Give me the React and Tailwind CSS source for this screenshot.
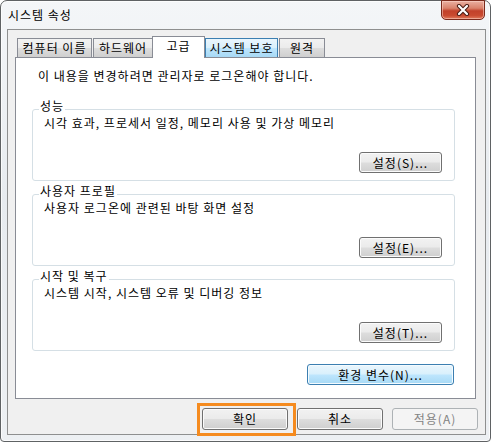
const btnStyles = {
  normal:
    'border-[#707070] bg-[linear-gradient(180deg,#f2f2f2_0%,#ebebeb_48%,#dddddd_52%,#cfcfcf_100%)] text-black shadow-[inset_0_0_0_1px_#fbfbfb]',
  hot: 'border-[#3c7fb1] bg-[linear-gradient(180deg,#eaf6fd_0%,#d9f0fc_48%,#bee6fd_52%,#a7d9f5_100%)] text-black shadow-[inset_0_0_0_1px_#f4fbff]',
  disabled: 'border-[#adb2b5] bg-[#f4f4f4] text-[#838383]',
}

const Btn = ({ children, variant = 'normal', className = '' }) => (
  <div
    className={`flex items-center justify-center rounded-[3px] border leading-[14px] ${btnStyles[variant]} ${className}`}
  >
    {children}
  </div>
)

const tabStyles = {
  normal:
    'h-[19px] border-[#898c95] bg-[linear-gradient(180deg,#f2f2f2_0%,#ebebeb_48%,#dddddd_52%,#cfcfcf_100%)]',
  hot: 'h-[19px] border-[#3c7fb1] bg-[linear-gradient(180deg,#eaf6fd_0%,#d9f0fc_48%,#bee6fd_52%,#a7d9f5_100%)]',
  active: 'relative z-10 -mb-px -ml-px h-[22px] border-[#898c95] bg-white pb-[3px]',
}

const tabs = [
  { label: '컴퓨터 이름', w: 'w-[75px]', state: 'normal' },
  { label: '하드웨어', w: 'ml-px w-[60px]', state: 'normal' },
  { label: '고급', w: 'w-[53px]', state: 'active' },
  { label: '시스템 보호', w: 'w-[73px]', state: 'hot' },
  { label: '원격', w: 'ml-px w-[46px]', state: 'normal' },
]

const Group = ({ title, desc, button, className = '' }) => (
  <div
    className={`relative ml-[16px] flex h-[72px] w-[423px] flex-col rounded-[3px] border border-[#d5dfe5] ${className}`}
  >
    <span className="absolute -top-[11px] left-[6px] bg-white px-[1px] leading-[14px]">{title}</span>
    <div className="ml-[11px] mt-[6px] leading-[14px]">{desc}</div>
    <Btn className="mb-[7px] mr-[12px] mt-auto h-[21px] w-[83px] self-end">{button}</Btn>
  </div>
)

export default function App() {
  return (
    <div className="h-[442px] w-[493px] bg-white font-['Noto_Sans_CJK_KR',sans-serif] text-[12px] tracking-[1px] text-black">
      <div className="relative h-[442px] w-[491px] rounded-t-[7px] rounded-b-[4px] border border-[#5f6264] bg-[linear-gradient(180deg,#f4f6f8_0%,#e7ebef_45%,#edf0f3_100%)] shadow-[inset_0_0_0_1px_rgba(255,255,255,0.75)]">
        {/* title bar */}
        <div className="h-[28px] pl-[7px] pt-[7px] leading-[14px]">시스템 속성</div>
        <div className="absolute -top-px right-[5px] flex h-[20px] w-[44px] items-center justify-center rounded-b-[5px] border border-[#7a2a1c] bg-[linear-gradient(180deg,#eab0a2_0%,#d9826c_40%,#c2412a_55%,#c94a30_80%,#e07a5c_100%)] shadow-[inset_0_0_0_1px_rgba(255,220,210,0.5)]">
          <svg width="16" height="12" viewBox="0 0 16 12">
            <path d="M4 2 L12 10 M12 2 L4 10" stroke="#4a1c14" strokeWidth="4.2" strokeLinecap="round" />
            <path d="M4 2 L12 10 M12 2 L4 10" stroke="#ffffff" strokeWidth="2.2" strokeLinecap="round" />
          </svg>
        </div>

        {/* client area */}
        <div className="ml-[6px] h-[406px] w-[479px] border border-[#8e8f8f] bg-[#f0f0f0]">
          {/* tabs */}
          <div className="mt-[6px] flex h-[21px] items-end pl-[9px]">
            {tabs.map((t) => (
              <div
                key={t.label}
                className={`flex items-center justify-center border border-b-0 leading-[14px] ${t.w} ${tabStyles[t.state]}`}
              >
                {t.label}
              </div>
            ))}
          </div>

          {/* panel */}
          <div className="ml-[7px] flex h-[342px] w-[461px] flex-col border border-[#898c95] bg-white">
            <div className="ml-[22px] mt-[11px] leading-[14px]">
              이 내용을 변경하려면 관리자로 로그온해야 합니다.
            </div>
            <Group
              className="mt-[26px]"
              title="성능"
              desc="시각 효과, 프로세서 일정, 메모리 사용 및 가상 메모리"
              button="설정(S)..."
            />
            <Group
              className="mt-[13px]"
              title="사용자 프로필"
              desc="사용자 로그온에 관련된 바탕 화면 설정"
              button="설정(E)..."
            />
            <Group
              className="mt-[13px]"
              title="시작 및 복구"
              desc="시스템 시작, 시스템 오류 및 디버깅 정보"
              button="설정(T)..."
            />
            <Btn variant="hot" className="mr-[21px] mt-[13px] h-[21px] w-[147px] self-end">
              환경 변수(N)...
            </Btn>
          </div>

          {/* dialog buttons */}
          <div className="mt-[9px] flex justify-end gap-[9px] pr-[7px]">
            <Btn className="h-[22px] w-[86px]">확인</Btn>
            <Btn className="h-[22px] w-[86px]">취소</Btn>
            <Btn variant="disabled" className="h-[22px] w-[86px]">
              적용(A)
            </Btn>
          </div>
        </div>

        {/* highlight around OK */}
        <div className="absolute left-[196px] top-[402px] h-[33px] w-[99px] border-[3px] border-[#f58b1f]" />
      </div>
    </div>
  )
}
